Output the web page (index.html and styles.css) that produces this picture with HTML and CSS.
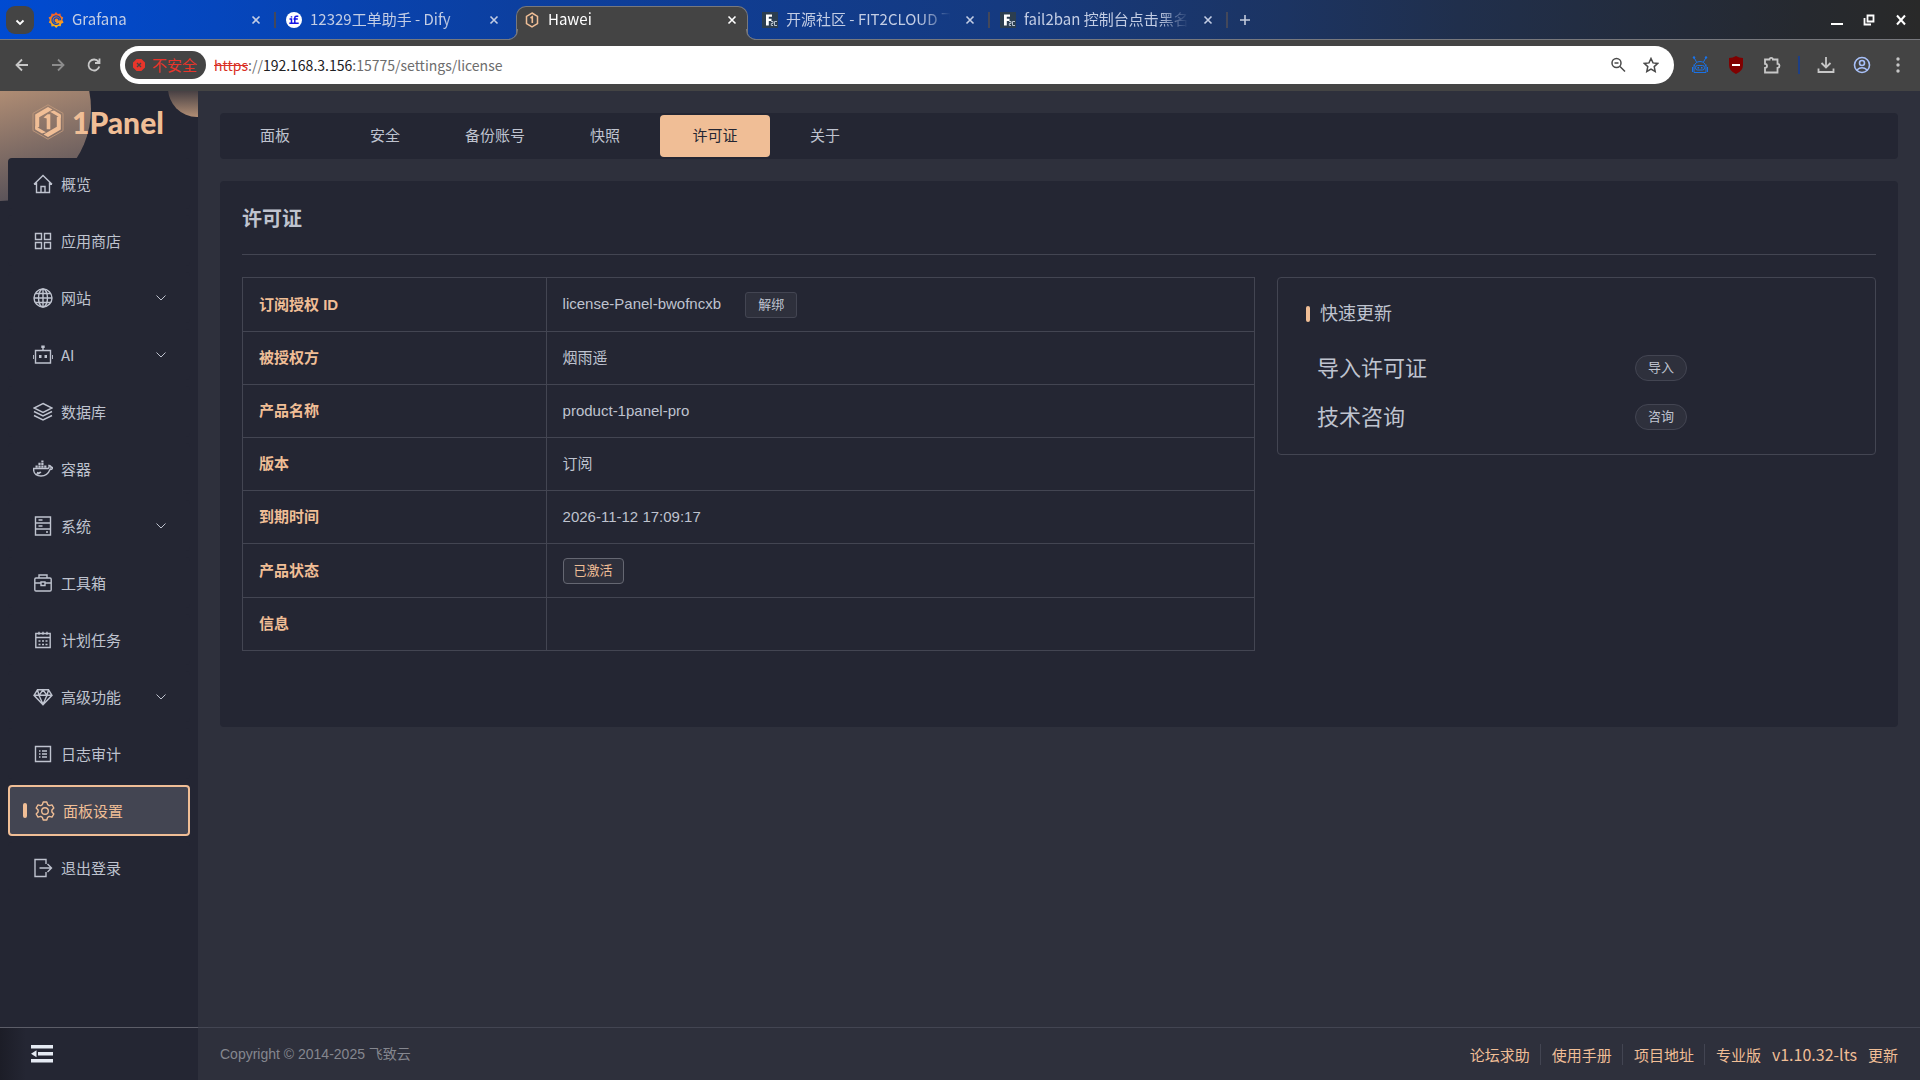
FILE: index.html
```html
<!DOCTYPE html>
<html lang="zh-CN">
<head>
    <meta charset="UTF-8">
    <meta name="viewport" content="width=device-width, initial-scale=1.0">
    <title>Hawei</title>
    <link rel="stylesheet" href="styles.css">
</head>
<body>

    <!-- Browser window: tab strip -->
    <div class="tab-strip">
        <button class="tab-search" aria-label="搜索标签页">
            <svg width="10" height="10" viewBox="0 0 10 10"><path d="M1.500 3.500 5 7l3.500-3.500" fill="none" stroke="#fff" stroke-width="1.800"/></svg>
        </button>
        <div class="tab">
            <svg class="favicon" viewBox="0 0 16 16">
                <defs><linearGradient id="gf" x1="0" y1="1" x2="0" y2="0"><stop offset="0" stop-color="#fcc11a"/><stop offset="1" stop-color="#f0502a"/></linearGradient></defs>
                <path d="M8 0 9.800 2l2.700-.5.300 2.600 2.400 1.400-.9 2.500 1.300 2.400-2.400 1.300-.5 2.600-2.600-.2L8.200 16l-2-1.900-2.700.3-.4-2.600L.8 10.400l1.100-2.400L.6 5.600 3 4.300l.5-2.700 2.700.400z" fill="url(#gf)"/>
                <path d="M12.600 8.200a4.300 4.300 0 1 0-1.600 3.300M11 8.500A2.500 2.500 0 1 0 8.300 10.800" fill="none" stroke="#0a49c4" stroke-width="1.300"/>
            </svg>
            <span class="tab-title">Grafana</span>
            <button class="tab-close" aria-label="关闭"><svg width="10" height="10" viewBox="0 0 10 10"><path d="M1.500 1.500l7 7M8.500 1.500l-7 7"/></svg></button>
        </div>
        <div class="tab before-active">
            <svg class="favicon" viewBox="0 0 16 16">
                <circle cx="8" cy="8" r="8" fill="#fff"/>
                <path d="M3.500 7h2v4M3.300 11.300h9.400M5.500 4.200v1.300M8.800 11V5.800q0-1.500 1.500-1.500h2M7.500 7h4.300" fill="none" stroke="#1414e6" stroke-width="1.500"/>
            </svg>
            <span class="tab-title">12329工单助手 - Dify</span>
            <button class="tab-close" aria-label="关闭"><svg width="10" height="10" viewBox="0 0 10 10"><path d="M1.500 1.500l7 7M8.500 1.500l-7 7"/></svg></button>
        </div>
        <div class="tab active">
            <svg class="favicon" viewBox="0 0 16 16">
                <path d="M8 1l5.500 3.300v7.400L8 15l-5.500-3.300V4.300z" fill="none" stroke="#f0be96" stroke-width="1.500"/>
                <path d="M6.500 6 8.300 4.800V11" fill="none" stroke="#f0be96" stroke-width="1.600"/>
            </svg>
            <span class="tab-title">Hawei</span>
            <button class="tab-close" aria-label="关闭"><svg width="10" height="10" viewBox="0 0 10 10"><path d="M1.500 1.500l7 7M8.500 1.500l-7 7"/></svg></button>
        </div>
        <div class="tab">
            <svg class="favicon" viewBox="0 0 16 16">
                <rect width="16" height="16" fill="#2c3e50"/>
                <path d="M4 2.500h6v2.300H6.800v2h2.700V9H6.800v4.500H4z" fill="#fff"/>
                <path d="M9 9.500h2v2H9.300v2H11M15 9.500h-2.500v4H15" fill="none" stroke="#b9c4d0"/>
            </svg>
            <span class="tab-title">开源社区 - FIT2CLOUD 飞致云</span>
            <button class="tab-close" aria-label="关闭"><svg width="10" height="10" viewBox="0 0 10 10"><path d="M1.500 1.500l7 7M8.500 1.500l-7 7"/></svg></button>
        </div>
        <div class="tab">
            <svg class="favicon" viewBox="0 0 16 16">
                <rect width="16" height="16" fill="#2c3e50"/>
                <path d="M4 2.500h6v2.300H6.800v2h2.700V9H6.800v4.500H4z" fill="#fff"/>
                <path d="M9 9.500h2v2H9.300v2H11M15 9.500h-2.500v4H15" fill="none" stroke="#b9c4d0"/>
            </svg>
            <span class="tab-title">fail2ban 控制台点击黑名单</span>
            <button class="tab-close" aria-label="关闭"><svg width="10" height="10" viewBox="0 0 10 10"><path d="M1.500 1.500l7 7M8.500 1.500l-7 7"/></svg></button>
        </div>
        <button class="tab-new" aria-label="新标签页"><svg width="12" height="12" viewBox="0 0 12 12"><path d="M6 1v10M1 6h10" stroke="#c3cbdc" stroke-width="1.600"/></svg></button>
        <div class="window-buttons">
            <button aria-label="最小化"><svg width="12" height="12" viewBox="0 0 12 12"><path d="M0 10h12" stroke="#fff" stroke-width="2"/></svg></button>
            <button aria-label="还原"><svg width="12" height="12" viewBox="0 0 12 12"><path d="M4.500 1.500h6v6h-6zM1.500 4v6.500H8" fill="none" stroke="#fff" stroke-width="1.800"/></svg></button>
            <button aria-label="关闭窗口"><svg width="12" height="12" viewBox="0 0 12 12"><path d="M2 1.500l8 9M10 1.500l-8 9" stroke="#fff" stroke-width="2"/></svg></button>
        </div>
    </div>

    <!-- Browser window: toolbar -->
    <div class="toolbar">
        <button class="tool" aria-label="后退"><svg width="16" height="16" viewBox="0 0 16 16"><path class="line" d="M14 8H3M8 2.500 2.500 8 8 13.500"/></svg></button>
        <button class="tool dim" aria-label="前进"><svg width="16" height="16" viewBox="0 0 16 16"><path class="line" d="M2 8h11M8 2.500 13.500 8 8 13.500"/></svg></button>
        <button class="tool" aria-label="重新加载"><svg width="16" height="16" viewBox="0 0 16 16"><path class="line" d="M13.300 9.500A5.500 5.500 0 1 1 12.500 4.800M13.500 1.500V6H9"/></svg></button>
        <div class="omnibox">
            <button class="security-chip">
                <svg width="12" height="12" viewBox="0 0 12 12"><path d="M3.600 0h4.800L12 3.600v4.800L8.400 12H3.600L0 8.400V3.600z" fill="#e8352b"/><path d="M4 4l4 4M8 4 4 8" stroke="#444" stroke-width="1.300"/></svg>
                <span>不安全</span>
            </button>
            <div class="url" role="textbox" aria-label="地址" contenteditable="true" spellcheck="false"><span class="scheme">https</span>://<span class="host">192.168.3.156</span>:15775/settings/license</div>
            <button class="omni-icon" aria-label="缩放"><svg width="16" height="16" viewBox="0 0 16 16"><circle cx="6.500" cy="6" r="4.500"/><path d="M10 9.500l5 5M4.500 6h4"/></svg></button>
            <button class="omni-icon" aria-label="收藏"><svg width="16" height="16" viewBox="0 0 16 16"><path d="M8 1.500l2 4.400 4.800.5-3.600 3.200 1 4.800L8 12l-4.200 2.400 1-4.800L1.200 6.400 6 5.900z"/></svg></button>
        </div>
        <div class="toolbar-right">
            <button class="tool" aria-label="机器人"><svg width="18" height="18" viewBox="0 0 18 18"><g fill="none" stroke="#1a73e8"><path d="M5.500 6 3 1.500M12.500 6 15 1.500M3.500 10a5.500 4.500 0 0 1 11 0M1.500 11v5M16.500 11v5M3 8.500V16.500h12V8.500"/><rect x="4.500" y="9.500" width="9" height="4.500" rx="2"/></g><circle cx="3" cy="1.500" r="1.200" fill="#1a73e8"/><circle cx="15" cy="1.500" r="1.200" fill="#1a73e8"/><path d="M6.500 11.700h1.500M10 11.700h1.500" stroke="#1a73e8" stroke-width="1.500"/></svg></button>
            <button class="tool" aria-label="uBlock"><svg width="16" height="18" viewBox="0 0 16 18"><path d="M8 0q3 2 7 2v7q0 6-7 9-7-3-7-9V2q4 0 7-2z" fill="#800000"/><path d="M4 9h8" stroke="#fff" stroke-width="2"/></svg></button>
            <button class="tool" aria-label="扩展程序"><svg width="18" height="18" viewBox="0 0 18 18"><path class="line" d="M2 3.500h4.500a1.700 1.700 0 0 1 3.400 0h4.600v4.300a2 2 0 0 1 0 4v4.700H2v-4.600q2-.2 2-2t-2-2z"/></svg></button>
            <span class="tool-divider"></span>
            <button class="tool" aria-label="下载"><svg width="18" height="18" viewBox="0 0 18 18"><path class="line" d="M9 1v10.500M4.500 7 9 11.500 13.500 7M1.500 12.500V16h15v-3.500"/></svg></button>
            <button class="tool" aria-label="个人资料"><svg width="18" height="18" viewBox="0 0 18 18"><g fill="none" stroke="#a8c0f8" stroke-width="1.600"><circle cx="9" cy="9" r="7.500"/><circle cx="9" cy="7" r="2.500"/><path d="M3.800 14Q9 9.500 14.200 14"/></g></svg></button>
            <button class="tool" aria-label="菜单"><svg width="16" height="16" viewBox="0 0 16 16"><g fill="#c7c7c7"><circle cx="8" cy="2" r="1.700"/><circle cx="8" cy="8" r="1.700"/><circle cx="8" cy="14" r="1.700"/></g></svg></button>
        </div>
    </div>

    <div class="app">

        <!-- Sidebar -->
        <aside class="sidebar">
            <a class="logo" href="#">
                <svg width="32" height="36" viewBox="0 0 32 36">
                    <path d="M16 .8 31 9.300v17.400L16 35.200 1 26.700V9.300z" fill="none" stroke="#b99479" stroke-width="1"/>
                    <path d="M16 3 20.500 5.600 7.200 13.200v9.600L3.200 25V10.600zM16 33l-4.500-2.600 13.300-7.600v-9.600L28.800 11v14.400z" fill="#f0be96"/>
                    <path d="M22 6.500l6.800 3.900v3.500L18 7.800zM10 29.500l-6.800-3.900v-3.500L14 28.200z" fill="#f0be96"/>
                    <path d="M11.500 13.500l4-3.200h2.800v15h-3.600V14.500z" fill="#f0be96"/>
                </svg>
                <span>1Panel</span>
            </a>
            <nav class="menu">
                <a class="menu-item" href="#">
                    <svg viewBox="0 0 20 20"><path d="M1 10.300 10 1.500l9 8.800M3.500 8.500v10h13v-10M8 18.500v-6h4v6M1 10.300h2.500M19 10.300h-2.500"/></svg>
                    <span>概览</span>
                </a>
                <a class="menu-item" href="#">
                    <svg viewBox="0 0 20 20"><path d="M2.500 2.500h6v6h-6zM11.500 2.500h6v6h-6zM2.500 11.500h6v6h-6zM11.500 11.500h6v6h-6z"/></svg>
                    <span>应用商店</span>
                </a>
                <a class="menu-item" href="#">
                    <svg viewBox="0 0 20 20"><circle cx="10" cy="10" r="9"/><ellipse cx="10" cy="10" rx="4.500" ry="9"/><path d="M10 1v18M1 10h18M2.500 5.500h15M2.500 14.500h15"/></svg>
                    <span>网站</span>
                    <svg class="arrow" viewBox="0 0 12 12"><path d="M1.500 3.500 6 8l4.500-4.500"/></svg>
                </a>
                <a class="menu-item" href="#">
                    <svg viewBox="0 0 20 20"><path d="M2.500 5.500h15v12.500h-15zM10 5V2M.2 10v4M19.800 10v4"/><path d="M8.300.5h3.400v2.500H8.300zM6 10h2.500v3H6zM11.500 10H14v3h-2.500z" class="solid"/></svg>
                    <span>AI</span>
                    <svg class="arrow" viewBox="0 0 12 12"><path d="M1.500 3.500 6 8l4.500-4.500"/></svg>
                </a>
                <a class="menu-item" href="#">
                    <svg viewBox="0 0 20 20"><path d="M10 1.500 19 6l-9 4.500L1 6zM1 9.500l9 4.500 9-4.500M1 13.500l9 4.500 9-4.500"/></svg>
                    <span>数据库</span>
                </a>
                <a class="menu-item" href="#">
                    <svg viewBox="0 0 20 20"><path d="M.5 9.500h14.500q1.500-.5 1-3 2 0 2 2 1-.5 2 .2-.8 1.800-3 1.800Q14.500 17 8 17 .5 17 .5 9.500zM4 13.500q2 1 3.500-.5M3 15.500q3-.5 5-2.500"/><path d="M2.500 6.500h2.200v2.300H2.500zM5.400 6.500h2.200v2.300H5.400zM8.300 6.500h2.200v2.300H8.300zM11.200 6.500h2.200v2.300h-2.200zM5.400 3.800h2.200v2.200H5.400zM8.300 3.800h2.200v2.200H8.300zM8.300 1.500h2.200v1.800H8.300z" class="solid"/></svg>
                    <span>容器</span>
                </a>
                <a class="menu-item" href="#">
                    <svg viewBox="0 0 20 20"><path d="M2.500 1h15v18h-15zM2.500 7h15M2.500 13h15M5.500 4h4M5.500 10h4M13 16h2"/></svg>
                    <span>系统</span>
                    <svg class="arrow" viewBox="0 0 12 12"><path d="M1.500 3.500 6 8l4.500-4.500"/></svg>
                </a>
                <a class="menu-item" href="#">
                    <svg viewBox="0 0 20 20"><path d="M3 5h14q1.200 0 1.200 1.200v10.600q0 1.200-1.200 1.200H3q-1.200 0-1.200-1.200V6.200Q1.800 5 3 5zM6 5V2h8v3M2 10h6M12 10h6M8 9h4v3.500H8z"/></svg>
                    <span>工具箱</span>
                </a>
                <a class="menu-item" href="#">
                    <svg viewBox="0 0 20 20"><path d="M2.800 3.500h14.400v14H2.800zM3 7.500h14M6 1.800v3M10 1.800v3M14 1.800v3M5.500 11h2M9 11h2M12.500 11h2M5.500 14.500h2M9 14.500h2M12.500 14.500h2"/></svg>
                    <span>计划任务</span>
                </a>
                <a class="menu-item" href="#">
                    <svg viewBox="0 0 20 20"><path d="M4.500 2.800h11L19 8.300l-9 9.500-9-9.500zM1 8.300h18M6 8.300l4 9 4-9M4.500 3 6 8.300l4-5.300 4 5.300L15.500 3"/></svg>
                    <span>高级功能</span>
                    <svg class="arrow" viewBox="0 0 12 12"><path d="M1.500 3.500 6 8l4.500-4.500"/></svg>
                </a>
                <a class="menu-item" href="#">
                    <svg viewBox="0 0 20 20"><path d="M2.500 2.500h15v15h-15zM6 7h1.500M9 7h5M6 10h1.500M9 10h5M6 13h1.500M9 13h5"/></svg>
                    <span>日志审计</span>
                </a>
                <a class="menu-item active" href="#">
                    <svg viewBox="0 0 20 20"><path d="M8.200 1h3.600l.8 2.600 1.700 1 2.700-.7 1.800 3.100-1.900 2v2l1.900 2-1.800 3.100-2.700-.7-1.700 1-.8 2.600H8.200l-.8-2.600-1.700-1-2.700.7L1.200 13l1.900-2V9L1.200 7 3 3.900l2.700.7 1.700-1z" stroke-linejoin="round"/><circle cx="10" cy="10" r="3.300"/></svg>
                    <span>面板设置</span>
                </a>
                <a class="menu-item" href="#">
                    <svg viewBox="0 0 20 20"><path d="M13 6V1.500H2v17h11V14M6.500 10H18M14.500 6l4 4-4 4"/></svg>
                    <span>退出登录</span>
                </a>
            </nav>
            <div class="collapse">
                <button aria-label="收起菜单">
                    <svg width="22" height="18" viewBox="0 0 22 18"><path d="M0 0h22v3.500H0zM7 7h15v3.500H7zM0 14h22v3.500H0zM5.500 5.200v7L0 8.700z" fill="#e5eaf3"/></svg>
                </button>
            </div>
        </aside>

        <!-- Main content -->
        <div class="main">
            <main class="content">
                <nav class="settings-tabs">
                    <button>面板</button>
                    <button>安全</button>
                    <button>备份账号</button>
                    <button>快照</button>
                    <button class="active">许可证</button>
                    <button>关于</button>
                </nav>

                <section class="panel">
                    <h1>许可证</h1>
                    <div class="panel-row">
                        <div class="col-info">
                            <table class="info-table">
                                <tr class="tall">
                                    <th scope="row">订阅授权 ID</th>
                                    <td>license-Panel-bwofncxb <button class="small-btn unbind">解绑</button></td>
                                </tr>
                                <tr>
                                    <th scope="row">被授权方</th>
                                    <td>烟雨遥</td>
                                </tr>
                                <tr>
                                    <th scope="row">产品名称</th>
                                    <td>product-1panel-pro</td>
                                </tr>
                                <tr>
                                    <th scope="row">版本</th>
                                    <td>订阅</td>
                                </tr>
                                <tr>
                                    <th scope="row">到期时间</th>
                                    <td>2026-11-12 17:09:17</td>
                                </tr>
                                <tr class="tall">
                                    <th scope="row">产品状态</th>
                                    <td><span class="status-tag">已激活</span></td>
                                </tr>
                                <tr>
                                    <th scope="row">信息</th>
                                    <td></td>
                                </tr>
                            </table>
                        </div>
                        <div class="col-update">
                            <div class="update-card">
                                <h2>快速更新</h2>
                                <div class="update-row">
                                    <span>导入许可证</span>
                                    <button class="small-btn round">导入</button>
                                </div>
                                <div class="update-row">
                                    <span>技术咨询</span>
                                    <button class="small-btn round">咨询</button>
                                </div>
                            </div>
                        </div>
                    </div>
                </section>
            </main>

            <footer class="footer">
                <span class="copyright">Copyright © 2014-2025 飞致云</span>
                <div class="footer-links">
                    <a href="#">论坛求助</a>
                    <a href="#">使用手册</a>
                    <a href="#">项目地址</a>
                    <div class="version">
                        <a href="#">专业版</a>
                        <span class="version-number">v1.10.32-lts</span>
                        <a href="#">更新</a>
                    </div>
                </div>
            </footer>
        </div>
    </div>

</body>
</html>
```

FILE: styles.css
```css
* {
    box-sizing: border-box;
}

body {
    margin: 0;
    height: 100vh;
    display: flex;
    flex-direction: column;
    overflow: hidden;
    background-color: #2e303c;
    color: #bfc3cf;
    font-family: "Liberation Sans", "Noto Sans CJK SC", sans-serif;
    font-size: 15px;
}

button {
    margin: 0;
    padding: 0;
    border: none;
    background: none;
    color: inherit;
    font: inherit;
    cursor: pointer;
}

a {
    color: inherit;
    text-decoration: none;
}

/* Tab strip */
.tab-strip {
    display: flex;
    flex: none;
    height: 39px;
    padding-left: 6px;
    background: linear-gradient(90deg, #004bd2 0%, #0c3f9f 27%, #153a80 52%, #1c3462 67%, #202f4c 76%, #26292f 94%, #292929 100%);
    font-family: "Noto Sans CJK SC", sans-serif;
}

.tab-search {
    width: 28px;
    height: 28px;
    margin: 6px 4px 0 0;
    border-radius: 9px;
    background-color: #444;
}

.tab {
    position: relative;
    display: flex;
    align-items: center;
    width: 238px;
    height: 39px;
    padding: 0 12px 0 10px;
    color: #c3cde4;
}

/* Thin divider between inactive tabs */
.tab::after {
    content: "";
    position: absolute;
    right: 0;
    top: 12px;
    width: 2px;
    height: 16px;
    background-color: #44485a;
}

.tab.before-active::after {
    display: none;
}

.favicon {
    flex: none;
    width: 16px;
    height: 16px;
    margin-right: 8px;
}

.tab-title {
    flex: 1;
    height: 24px;
    line-height: 22px;
    overflow: hidden;
    white-space: nowrap;
    -webkit-mask-image: linear-gradient(90deg, #000 80%, transparent 98%);
    mask-image: linear-gradient(90deg, #000 80%, transparent 98%);
}

.tab-close {
    flex: none;
    display: flex;
    justify-content: center;
    align-items: center;
    width: 16px;
    height: 16px;
    margin-left: 8px;
}

.tab-close path {
    stroke: currentColor;
    stroke-width: 1.6;
}

.tab.active {
    z-index: 1;
    width: 232px;
    height: 34px;
    margin: 6px 4px 0 2px;
    padding: 0 7px 8px;
    border: 1px solid #77787d;
    border-bottom: none;
    border-radius: 10px 10px 0 0;
    background-color: #444;
    color: #fff;
}

/* Curved feet of the active tab */
.tab.active::before,
.tab.active::after {
    content: "";
    position: absolute;
    top: auto;
    bottom: 0;
    width: 10px;
    height: 10px;
    border: solid #77787d;
    background: none;
}

.tab.active::before {
    left: -10px;
    border-width: 0 1px 1px 0;
    border-bottom-right-radius: 10px;
    box-shadow: 3px 3px 0 #444;
    clip-path: inset(0 -1px 0 0);
}

.tab.active::after {
    right: -10px;
    border-width: 0 0 1px 1px;
    border-bottom-left-radius: 10px;
    box-shadow: -3px 3px 0 #444;
    clip-path: inset(0 0 0 -1px);
}

.tab-new {
    width: 34px;
    height: 39px;
}

.window-buttons {
    display: flex;
    align-items: center;
    gap: 20px;
    margin-left: auto;
    padding-right: 13px;
}

.window-buttons button {
    display: flex;
}

/* Toolbar */
.toolbar {
    display: flex;
    flex: none;
    align-items: center;
    height: 52px;
    padding: 0 10px 2px;
    border-top: 1px solid #77787d;
    background-color: #444;
    font-family: "Noto Sans CJK SC", sans-serif;
}

.tool {
    display: flex;
    justify-content: center;
    align-items: center;
    width: 24px;
    height: 24px;
    margin-right: 12px;
}

.tool .line {
    fill: none;
    stroke: #c7c7c7;
    stroke-width: 1.8;
}

.tool.dim .line {
    stroke: #8c8c8c;
}

.omnibox {
    display: flex;
    flex: 1;
    align-items: center;
    height: 38px;
    margin-left: 2px;
    padding: 0 15px 0 5px;
    border-radius: 19px;
    background-color: #fff;
}

.security-chip {
    display: flex;
    align-items: center;
    gap: 7px;
    height: 28px;
    padding: 0 9px 0 8px;
    border-radius: 14px;
    background-color: #444;
    color: #e8352b;
    line-height: 28px;
}

.url {
    flex: 1;
    margin-left: 8px;
    color: #6d6d6d;
    font-size: 14px;
    outline: none;
}

.url .scheme {
    color: #d93025;
    text-decoration: line-through;
}

.url .host {
    color: #202124;
}

.omni-icon {
    display: flex;
    margin-left: 17px;
}

.omni-icon path,
.omni-icon circle {
    fill: none;
    stroke: #4a4a4a;
    stroke-width: 1.5;
}

.toolbar-right {
    display: flex;
    align-items: center;
    padding-left: 14px;
}

.toolbar-right .tool:last-child {
    margin-right: 0;
}

.tool-divider {
    width: 2px;
    height: 18px;
    margin: 0 14px 0 2px;
    background-color: #1d3f86;
}

/* App layout */
.app {
    display: flex;
    flex: 1;
    min-height: 0;
}

/* Sidebar */
.sidebar {
    position: relative;
    z-index: 0;
    display: flex;
    flex-direction: column;
    flex: none;
    width: 198px;
    overflow: hidden;
    background-color: #242633;
    font-family: "Noto Sans CJK SC", sans-serif;
}

/* Decorative circles behind the logo */
.sidebar::before,
.sidebar::after {
    content: "";
    position: absolute;
    z-index: -1;
    border-radius: 50%;
}

.sidebar::before {
    left: -93px;
    top: -74px;
    width: 184px;
    height: 184px;
    background: linear-gradient(165deg, #b08d74 42%, #4a4854 100%);
}

.sidebar::after {
    left: 168px;
    top: -32px;
    width: 58px;
    height: 58px;
    background: linear-gradient(180deg, #242633 40%, #b18e75 100%);
}

.logo {
    display: flex;
    align-items: center;
    gap: 8px;
    height: 67px;
    padding: 0 0 6px 32px;
    color: #f0be96;
    font-family: Lato, sans-serif;
    font-size: 30px;
    font-weight: 900;
}

.menu {
    display: flex;
    flex: 1;
    flex-direction: column;
    gap: 6px;
    padding: 0 8px;
}

.menu-item {
    display: flex;
    align-items: center;
    gap: 8px;
    height: 51px;
    padding: 0 23px 0 25px;
    border-radius: 4px;
    background-color: #242633;
}

.menu-item svg {
    width: 20px;
    height: 20px;
    fill: none;
    stroke: currentColor;
    stroke-width: 1.4;
}

.menu-item .solid {
    fill: currentColor;
    stroke: none;
}

.menu-item .arrow {
    width: 12px;
    height: 12px;
    margin-left: auto;
    stroke-width: 1;
}

.menu-item.active {
    padding-left: 13px;
    border: 2px solid #f0be96;
    background-color: #434552;
    color: #f0be96;
}

.menu-item.active::before {
    content: "";
    width: 4px;
    height: 15px;
    border-radius: 2px;
    background-color: #f0be96;
}

.collapse {
    display: flex;
    align-items: center;
    height: 53px;
    padding-left: 31px;
    border-top: 1px solid #5c5d68;
    background: linear-gradient(90deg, #1c1d27 0, #242633 26px);
}

.collapse button {
    display: flex;
}

/* Main area */
.main {
    display: flex;
    flex: 1;
    flex-direction: column;
    min-width: 0;
}

.content {
    flex: 1;
    padding: 22px 22px 0;
}

.settings-tabs {
    display: flex;
    padding: 2px 0;
    border-radius: 4px;
    background-color: #242633;
}

.settings-tabs button {
    width: 110px;
    height: 42px;
    padding-bottom: 4px;
    border-radius: 4px;
}

.settings-tabs .active {
    background-color: #f0be96;
    color: #242633;
}

.panel {
    min-height: 546px;
    margin-top: 22px;
    padding: 22px;
    border-radius: 4px;
    background-color: #242633;
}

.panel h1 {
    margin: 0 0 22px;
    padding-bottom: 18px;
    border-bottom: 1px solid #434552;
    font-size: 20px;
    line-height: 33px;
}

.panel-row {
    display: flex;
    align-items: flex-start;
    margin: 0 -11px;
}

.col-info {
    width: 62.5%;
    padding: 0 11px;
}

.col-update {
    width: 37.5%;
    padding: 0 11px;
}

/* License details */
.info-table {
    width: 100%;
    border-collapse: collapse;
    table-layout: fixed;
}

.info-table th,
.info-table td {
    height: 53px;
    padding: 0 16px;
    border: 1px solid #434552;
    text-align: left;
    line-height: 26px;
}

.info-table .tall td {
    height: 54px;
}

.info-table th {
    width: 30%;
    color: #f0be96;
}

.small-btn {
    height: 26px;
    padding: 0 12px;
    border: 1px solid #434552;
    border-radius: 3px;
    background-color: #2e303c;
    font-size: 13px;
    line-height: 22px;
}

.unbind {
    margin-left: 20px;
}

.small-btn.round {
    margin-top: 5px;
    border-radius: 13px;
}

.status-tag {
    display: inline-block;
    height: 26px;
    padding: 0 10px;
    border: 1px solid #656772;
    border-radius: 4px;
    background-color: #2e303c;
    color: #f0be96;
    font-size: 13px;
    line-height: 24px;
    vertical-align: middle;
}

/* Quick update card */
.update-card {
    padding: 23px 28px 15px;
    border: 1px solid #434552;
    border-radius: 4px;
}

.update-card h2 {
    display: flex;
    align-items: center;
    gap: 10px;
    margin: 0 0 14px;
    font-size: 18px;
    font-weight: normal;
    line-height: 26px;
}

.update-card h2::before {
    content: "";
    width: 4px;
    height: 16px;
    border-radius: 2px;
    background-color: #f0be96;
}

.update-row {
    display: grid;
    grid-template-columns: 60% 40%;
    align-items: center;
    justify-items: start;
    height: 49px;
    padding-left: 11px;
    font-size: 22px;
}

/* Footer */
.footer {
    display: flex;
    align-items: center;
    justify-content: space-between;
    height: 53px;
    padding: 0 22px;
    border-top: 1px solid #434552;
}

.copyright {
    padding-bottom: 2px;
    color: #85878f;
    font-size: 14px;
}

.footer-links {
    display: flex;
    align-items: center;
    color: #f0be96;
    font-family: "Noto Sans CJK SC", sans-serif;
}

.footer-links > a {
    margin-right: 11px;
    padding-right: 10px;
    border-right: 1px solid #434552;
}

.version {
    display: flex;
    align-items: center;
    gap: 11px;
}

.version-number {
    font-size: 16px;
}
```
